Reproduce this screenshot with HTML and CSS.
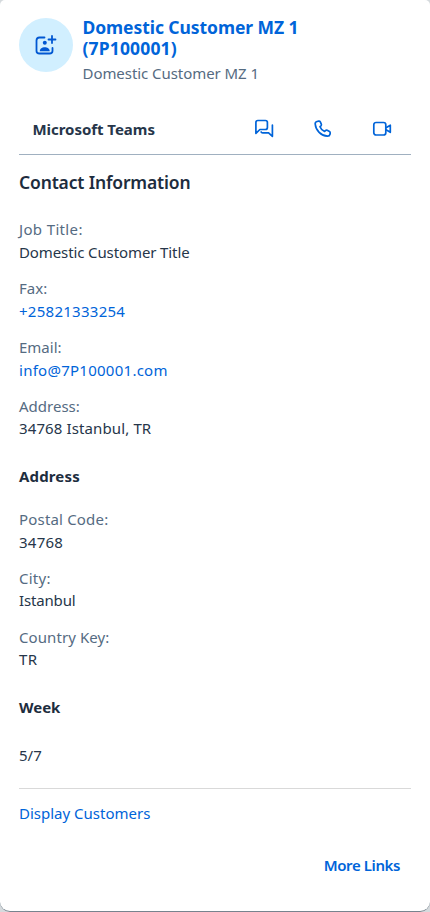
FILE: index.html
```html
<!DOCTYPE html>
<html lang="en">
<head>
<meta charset="utf-8">
<title>Domestic Customer MZ 1</title>
<link rel="stylesheet" href="styles.css">
</head>
<body>
<main class="card">
  <header class="head">
    <div class="avatar">
      <svg width="24" height="24" viewBox="0 0 24 24" fill="none" stroke="#0057d2" stroke-width="1.8" stroke-linecap="round" stroke-linejoin="round">
        <path d="M10.500 4.500H5.500Q2.500 4.500 2.500 7.500V18Q2.500 20.500 5.500 20.500H15.500Q18.500 20.500 18.500 18V15M18 3V10M14.500 6.500H21.500"/>
        <circle cx="10.800" cy="9.800" r="2" fill="#0057d2" stroke="none"/>
        <path d="M5.800 18.200C5.800 12.800 15.700 12.800 15.700 18.200Z" fill="#0057d2" stroke="none"/>
      </svg>
    </div>
    <div class="who">
      <a class="name">Domestic Customer MZ 1<br><span class="name-id">(7P100001)</span></a>
      <div class="sub">Domestic Customer MZ 1</div>
    </div>
  </header>
  <section class="teams">
    <span class="teams-label">Microsoft Teams</span>
    <div class="actions">
      <svg width="20" height="20" viewBox="0 0 20 20"><path d="M1.900 14.300V3.500Q1.900 1.500 3.900 1.500H11.400Q13.400 1.500 13.400 3.500V8.500Q13.400 10.500 11.400 10.500H5.900ZM18.400 6.200V17.300L14.600 13.800H8.700Q7.400 13.800 7.100 13"/></svg>
      <svg width="20" height="20" viewBox="0 0 20 20"><path d="M5.700 2.200L4 2.500Q2 3 2.200 5C2.800 11.500 8 16.800 14.500 17.200Q16.600 17.200 17 15.300L17.200 14Q17.300 13 16.500 12.500L14.200 11.300Q13.200 10.900 12.500 11.600L11.600 12.500Q8.200 11 7 7.700L8 6.800Q8.700 6.100 8.300 5.200L7.300 2.900Q6.800 2 5.700 2.200Z"/></svg>
      <svg width="20" height="20" viewBox="0 0 20 20"><rect x="1.800" y="3.500" width="12" height="12.500" rx="2.300"/><path d="M14 8.700L18.300 6.200V13.300L14 10.800"/></svg>
    </div>
  </section>
  <h1 class="section-title">Contact Information</h1>
  <dl class="fields">
    <div class="field"><dt class="job">Job Title:</dt><dd class="job-value">Domestic Customer Title</dd></div>
    <div class="field"><dt>Fax:</dt><dd><a class="fax-value">+25821333254</a></dd></div>
    <div class="field"><dt>Email:</dt><dd><a class="email-value">info@7P100001.com</a></dd></div>
    <div class="field"><dt class="tight">Address:</dt><dd class="addr-value">34768 Istanbul, TR</dd></div>
  </dl>
  <h2 class="group-title address-title">Address</h2>
  <dl class="fields">
    <div class="field"><dt class="postal">Postal Code:</dt><dd class="postal-value">34768</dd></div>
    <div class="field"><dt class="city tight">City:</dt><dd class="city-value">Istanbul</dd></div>
    <div class="field"><dt class="country tight">Country Key:</dt><dd class="country-value">TR</dd></div>
  </dl>
  <h2 class="group-title week-title">Week</h2>
  <div class="week-value">5/7</div>
  <div class="links"><a class="display-link">Display Customers</a></div>
  <footer class="foot"><a class="more">More Links</a></footer>
</main>
</body>
</html>
```
FILE: styles.css
```css
* { box-sizing: border-box; }
body { margin: 0; background: #d5dadd; font: 15px/22.5px "Noto Sans", sans-serif; color: #26364a; }
.card { height: 912px; padding: 18px 19px 0; background: #fff; border-bottom: 1px solid #77838e; border-radius: 5px 5px 10px 10px; overflow: hidden; white-space: nowrap; }
a { color: #0064d9; text-decoration: none; }
h1, h2, dl, dd { margin: 0; }
.head { display: flex; gap: 9.500px; height: 85px; }
.avatar { width: 54px; height: 54px; border-radius: 50%; background: #d1efff; display: flex; align-items: center; justify-content: center; }
.name { display: block; margin-top: -1px; font-size: 17.5px; line-height: 21px; font-weight: 700; letter-spacing: -0.070px; }
.name-id { letter-spacing: 0.150px; }
.sub { margin-top: 3px; color: #556b82; letter-spacing: -0.060px; }
.teams { height: 52px; padding: 1px 19px 0 14px; border-bottom: 1px solid #a0b0c0; display: flex; align-items: center; justify-content: space-between; }
.teams-label { margin-left: -0.500px; font-weight: 700; letter-spacing: -0.040px; }
.actions { display: flex; gap: 39px; }
.actions svg { display: block; fill: none; stroke: #0064d9; stroke-width: 1.7; stroke-linejoin: round; stroke-linecap: round; }
.section-title { margin-top: 14px; height: 49px; font-size: 17.5px; line-height: 26px; font-weight: 600; letter-spacing: -0.160px; color: #1d2d3e; }
.field { height: 59px; }
dt { height: 23px; color: #556b82; }
.tight { height: 22px; }
.job { letter-spacing: 0.350px; }
.job-value { letter-spacing: -0.110px; }
.fax-value { letter-spacing: 0.270px; }
.email-value { letter-spacing: 0.260px; }
.addr-value { letter-spacing: 0.120px; }
.postal { letter-spacing: 0.180px; }
.postal-value { letter-spacing: 0.250px; }
.city { letter-spacing: 0.250px; }
.city-value { letter-spacing: -0.150px; }
.country { letter-spacing: 0.080px; }
.country-value { letter-spacing: 0.500px; }
.group-title { height: 43px; font-size: 15px; line-height: 22.500px; font-weight: 700; color: #1d2d3e; }
.address-title { margin-top: 11px; letter-spacing: 0.150px; }
.week-title { margin-top: 11px; height: 48px; }
.week-value { height: 44px; }
.links { border-top: 1px solid #d9d9d9; padding-top: 13px; height: 66px; }
.foot { display: flex; justify-content: flex-end; padding-right: 11px; font-weight: 600; }
.more { letter-spacing: -0.400px; }
```
